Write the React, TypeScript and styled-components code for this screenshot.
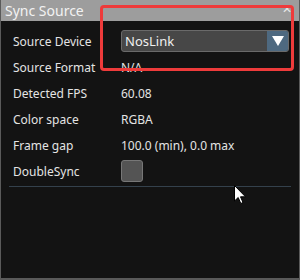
import React from "react";
import styled, { createGlobalStyle } from "styled-components";

const Global = createGlobalStyle`
  html, body { margin: 0; padding: 0; background: #131313; }
  body { font-family: "Noto Sans", "Open Sans", sans-serif; }
`;

const Window = styled.div`
  position: relative;
  width: 300px;
  height: 280px;
  box-sizing: border-box;
  background: #131313;
  border-left: 1px solid #5a5a5a;
  border-right: 1px solid #5a5a5a;
  border-bottom: 2px solid #5a5a5a;
  display: flex;
  flex-direction: column;
  overflow: hidden;
`;

const TitleBar = styled.div`
  height: 21px;
  flex: none;
  background: #9d9d9d;
  margin: 0 -1px;
  display: flex;
  align-items: center;
  justify-content: space-between;
  padding: 0 8px 0 5px;
`;

const Title = styled.span`
  color: #f2f2f2;
  font-size: 14px;
  line-height: 1;
`;

const Close = styled.span`
  color: #e6e6e6;
  font-size: 12px;
  line-height: 1;
  margin-top: -4px;
`;

const Body = styled.div`
  padding: 9px 8px 0 12px;
  display: flex;
  flex-direction: column;
`;

const Grid = styled.div`
  display: grid;
  grid-template-columns: 108px 1fr;
  grid-auto-rows: 22px;
  row-gap: 4px;
  align-items: center;
  padding-right: 2px;
`;

const Label = styled.span`
  color: #e4e4e4;
  font-size: 12px;
`;

const Value = styled.span`
  color: #e4e4e4;
  font-size: 12px;
`;

const Select = styled.div`
  height: 22px;
  box-sizing: border-box;
  border: 1px solid #6a6a6a;
  border-radius: 3px;
  background: #474747;
  display: flex;
  align-items: stretch;
  overflow: hidden;
`;

const SelectText = styled.span`
  flex: 1;
  color: #f0f0f0;
  font-size: 13px;
  display: flex;
  align-items: center;
  padding-left: 3px;
`;

const SelectArrow = styled.span`
  width: 21px;
  background: #4e6980;
  display: flex;
  align-items: center;
  justify-content: center;
`;

const Check = styled.div`
  width: 22px;
  height: 22px;
  box-sizing: border-box;
  border: 1px solid #777;
  border-radius: 3px;
  background: #545454;
`;

const Separator = styled.div`
  height: 1px;
  background: #34414c;
  margin: 4px 0 0 -4px;
`;

const Highlight = styled.div`
  position: absolute;
  left: 99px;
  top: 5px;
  width: 194px;
  height: 66px;
  box-sizing: border-box;
  border: 3px solid #ee3b3b;
  border-radius: 4px;
  pointer-events: none;
`;

const Cursor = styled.svg`
  position: absolute;
  left: 233px;
  top: 185px;
`;

const rows: [string, string][] = [
  ["Source Format", "N/A"],
  ["Detected FPS", "60.08"],
  ["Color space", "RGBA"],
  ["Frame gap", "100.0 (min), 0.0 max"],
];

export default function App() {
  return (
    <>
      <Global />
      <Window>
        <TitleBar>
          <Title>Sync Source</Title>
          <Close>✕</Close>
        </TitleBar>
        <Body>
          <Grid>
            <Label>Source Device</Label>
            <Select>
              <SelectText>NosLink</SelectText>
              <SelectArrow>
                <svg width="12" height="10" viewBox="0 0 12 10">
                  <path d="M0 0 H12 L6 10 Z" fill="#ffffff" />
                </svg>
              </SelectArrow>
            </Select>
            {rows.map(([k, v]) => (
              <React.Fragment key={k}>
                <Label>{k}</Label>
                <Value>{v}</Value>
              </React.Fragment>
            ))}
            <Label>DoubleSync</Label>
            <Check />
          </Grid>
          <Separator />
        </Body>
        <Highlight />
        <Cursor width="13" height="20" viewBox="0 0 13 20">
          <path d="M0.5 0.5 V16 L4.2 12.5 L6.8 18.5 L9 17.5 L6.5 11.8 H11.5 Z" fill="#ffffff" stroke="#000" strokeWidth="1" />
        </Cursor>
      </Window>
    </>
  );
}
